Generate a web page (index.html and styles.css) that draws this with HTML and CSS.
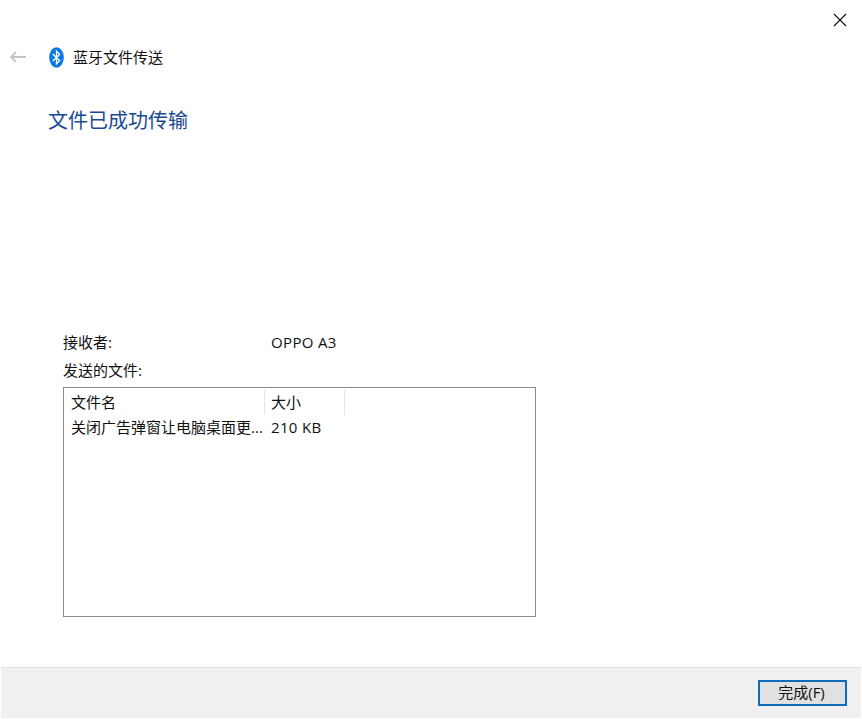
FILE: index.html
```html
<!DOCTYPE html>
<html lang="zh-CN">
<head>
<meta charset="utf-8">
<title>蓝牙文件传送</title>
<link rel="stylesheet" href="styles.css">
</head>
<body>
<div class="window">
  <main class="content">
    <div class="closebar">
      <svg class="close" width="14" height="14" viewBox="0 0 14 14"><path d="M1 1L13 13M13 1L1 13" stroke="#111" stroke-width="1.1" fill="none"/></svg>
    </div>
    <div class="navbar">
      <svg class="back" width="16" height="12" viewBox="0 0 16 12"><path d="M6 1L1 6L6 11M1 6H16" stroke="#c4c4c4" stroke-width="1.8" fill="none"/></svg>
      <svg class="bt" width="15" height="21" viewBox="0 0 15 21"><ellipse cx="7.5" cy="10.5" rx="7.3" ry="10.3" fill="#0a78e6"/><path d="M3.8 7L10.6 13.6L7.5 16.8V4.2L10.6 7.4L3.8 14" stroke="#fff" stroke-width="1.3" fill="none"/></svg>
      <span class="navtitle">蓝牙文件传送</span>
    </div>
    <h1 class="heading">文件已成功传输</h1>
    <div class="details">
      <div class="row">
        <span class="label">接收者:</span><span class="latin">OPPO A3</span>
      </div>
      <div class="files-label">发送的文件:</div>
      <div class="listbox">
        <div class="cols head">
          <span class="c1">文件名</span><span class="c2">大小</span>
        </div>
        <div class="cols item">
          <span class="c1">关闭广告弹窗让电脑桌面更...</span><span class="c2 latin">210 KB</span>
        </div>
      </div>
    </div>
  </main>
  <footer class="footer">
    <button class="finish">完成(F)</button>
  </footer>
</div>
</body>
</html>
```
FILE: styles.css
```css
* { box-sizing: border-box; }
html, body { margin: 0; height: 100%; background: #fff; }
body {
  font-family: "Open Sans", "Noto Sans CJK SC", sans-serif;
  font-size: 15px;
  color: #111;
  overflow: hidden;
}
.window { width: 862px; height: 719px; display: flex; flex-direction: column; }
.content { height: 667px; display: flex; flex-direction: column; }
.closebar { height: 37px; padding: 13px 0 0 833px; }
.close { display: block; }
.navbar { height: 40px; display: flex; align-items: center; padding-left: 10px; }
.back { flex: none; }
.bt { flex: none; margin-left: 23px; }
.navtitle { margin-left: 9px; line-height: 20px; }
.heading {
  margin: 27px 0 0 48px;
  font-size: 20px;
  line-height: 34px;
  font-weight: 400;
  color: #1a4a94;
}
.details { margin: 194px 0 0 63px; width: 473px; }
.row { display: flex; line-height: 20px; height: 20px; }
.label { width: 208px; }
.latin { letter-spacing: 0.35px; }
.files-label { margin-top: 8px; line-height: 20px; }
.listbox { margin-top: 7px; height: 230px; border: 1px solid #8a8a8a; padding-top: 2px; }
.cols { display: flex; line-height: 20px; }
.head { height: 25px; align-items: center; }
.item { height: 24px; margin-top: 2px; }
.c1 { width: 201px; padding-left: 7px; white-space: nowrap; }
.c2 { width: 80px; padding-left: 6px; }
.head .c1, .head .c2 { height: 25px; line-height: 25px; border-right: 1px solid #e5e5e5; }
.footer {
  height: 51px;
  margin: 0 1px 1px;
  background: #f0f0f0;
  border-top: 1px solid #e2e2e2;
  display: flex;
  justify-content: flex-end;
  align-items: flex-start;
  padding: 12px 14px 0 0;
}
.finish {
  width: 89px;
  height: 26px;
  padding: 0 2px 2px 0;
  border: 2px solid #0f6cb8;
  background: #e1e1e1;
  font: inherit;
  color: #111;
  line-height: 20px;
}
```
